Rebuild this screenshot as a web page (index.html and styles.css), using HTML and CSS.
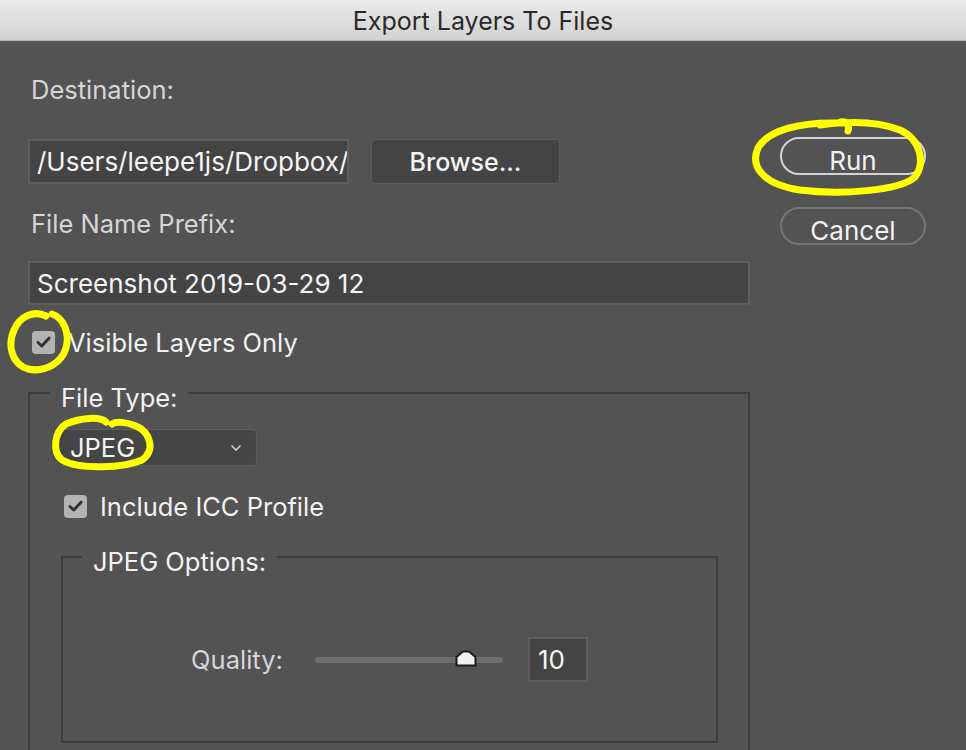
FILE: index.html
```html
<!DOCTYPE html>
<html lang="en">
<head>
    <meta charset="UTF-8">
    <title>Export Layers To Files</title>
    <link rel="stylesheet" href="styles.css">
</head>
<body>
    <div class="dialog">
        <div class="titlebar">Export Layers To Files</div>
        <div class="content">
            <div class="main">
                <div class="label">Destination:</div>
                <div class="path-row">
                    <div class="field path">/Users/leepe1js/Dropbox/</div>
                    <button class="browse">Browse...</button>
                </div>
                <div class="label prefix-label">File Name Prefix:</div>
                <div class="field prefix">Screenshot 2019-03-29 12</div>
                <div class="check visible">
                    <span class="box"><svg width="15" height="12" viewBox="0 0 15 12"><path d="M2 6.5 L5.8 10 L13 2.2" fill="none" stroke="#333" stroke-width="3" stroke-linecap="round" stroke-linejoin="round"/></svg></span>
                    Visible Layers Only
                </div>
                <fieldset class="group outer">
                    <legend>File Type:</legend>
                    <div class="select">
                        JPEG
                        <svg width="12" height="8" viewBox="0 0 12 8"><path d="M1.5 1.5 L6 6 L10.5 1.5" fill="none" stroke="#cfcfcf" stroke-width="1.6"/></svg>
                    </div>
                    <div class="check icc">
                        <span class="box"><svg width="15" height="12" viewBox="0 0 15 12"><path d="M2 6.5 L5.8 10 L13 2.2" fill="none" stroke="#333" stroke-width="3" stroke-linecap="round" stroke-linejoin="round"/></svg></span>
                        Include ICC Profile
                    </div>
                    <fieldset class="group inner">
                        <legend>JPEG Options:</legend>
                        <div class="quality">
                            <span class="quality-label">Quality:</span>
                            <div class="slider">
                                <div class="track"></div>
                                <svg class="thumb" width="22" height="17" viewBox="0 0 22 17"><path d="M1.5 15.5 L1.5 7 L8 1.5 L14 1.5 L20.5 7 L20.5 15.5 Z" fill="#f0f0f0" stroke="#1c1c1c" stroke-width="2" stroke-linejoin="round"/></svg>
                            </div>
                            <div class="field number">10</div>
                        </div>
                    </fieldset>
                </fieldset>
            </div>
            <div class="actions">
                <button class="pill run">Run</button>
                <button class="pill cancel">Cancel</button>
            </div>
        </div>

        <!-- yellow marker notes drawn over the dialog -->
        <svg class="marks" width="966" height="750" viewBox="0 0 966 750">
            <g fill="none" stroke="#ffff00" stroke-width="7" stroke-linecap="round" stroke-linejoin="round">
                <path d="M848 131 C850 123 846 120 838 123 C800 122 768 130 758 148 C750 166 762 184 800 190 C840 195 900 191 915 177 C926 162 920 139 900 130 C880 122 850 121 820 125"/>
                <path d="M46 316 C34 310 20 316 14 330 C7 346 12 364 28 369 C46 373 62 362 66 348 C70 334 64 318 52 314"/>
                <path d="M106 422 C100 416 80 418 66 424 C54 432 52 452 62 460 C80 470 124 468 142 460 C156 450 150 432 136 426 C126 422 116 421 112 424"/>
            </g>
        </svg>
    </div>
</body>
</html>
```

FILE: styles.css
```css
body {
    margin: 0;
    background: #535353;
    font-family: Inter, "Noto Sans", sans-serif;
}
.dialog {
    position: relative;
    width: 966px;
    height: 750px;
    overflow: hidden;
    background: #535353;
}
.titlebar {
    height: 40px;
    line-height: 42px;
    text-align: center;
    font-family: Inter, "Liberation Sans", sans-serif;
    font-size: 25px;
    color: #2a2a2a;
    background: linear-gradient(#ebeaeb, #d3d2d3);
    border-bottom: 1px solid #b4b4b4;
}
.content {
    display: flex;
    gap: 30px;
    padding: 34px 0 0 28px;
}
.main {
    width: 722px;
    display: flex;
    flex-direction: column;
}
.label {
    font-size: 25.5px;
    line-height: 30px;
    color: #d6d6d6;
    padding-left: 3px;
}
.prefix-label {
    margin-top: 25px;
}
.path-row {
    display: flex;
    gap: 22px;
    margin-top: 34px;
}
.field {
    box-sizing: border-box;
    background: #444444;
    border: 2px solid #5e5e5e;
    color: #f4f4f4;
    font-size: 26px;
    display: flex;
    align-items: center;
    padding-left: 7px;
    white-space: nowrap;
    overflow: hidden;
}
.path {
    width: 321px;
    height: 45px;
}
.browse {
    width: 189px;
    height: 45px;
    background: #444444;
    border: 1px solid #5c5c5c;
    border-radius: 4px;
    color: #f4f4f4;
    font-family: Inter, sans-serif;
    font-size: 25px;
    font-weight: 500;
}
.prefix {
    width: 722px;
    height: 44px;
    margin-top: 22px;
}
.check {
    display: flex;
    align-items: center;
    gap: 13px;
    height: 30px;
    font-size: 25.5px;
    color: #f2f2f2;
}
.check .box {
    width: 23px;
    height: 23px;
    border-radius: 4px;
    background: #b3b3b3;
    display: flex;
    align-items: center;
    justify-content: center;
}
.visible {
    margin-top: 22px;
    padding-left: 4px;
}
.group {
    margin: 16px 0 0;
    border: 2px solid #3d3d3d;
    min-width: 0;
}
.group legend {
    font-size: 25.5px;
    line-height: 30px;
    color: #f2f2f2;
    padding: 10px 11px 0;
}
.outer {
    padding: 0 30px 60px 31px;
}
.outer > legend {
    margin-left: -11px;
}
.select {
    box-sizing: border-box;
    width: 200px;
    height: 37px;
    margin: 16px 0 0 -4px;
    padding: 0 14px 0 12px;
    display: flex;
    align-items: center;
    justify-content: space-between;
    background: #454545;
    border: 1px solid #5e5e5e;
    border-radius: 4px;
    font-size: 25.5px;
    color: #f4f4f4;
}
.icc {
    margin-top: 25px;
    padding-left: 3px;
}
.inner {
    margin-top: 16px;
    padding: 0 19px 59px;
}
.quality {
    display: flex;
    align-items: center;
    justify-content: center;
    margin-top: 60px;
    margin-left: -19px;
    margin-right: -19px;
}
.quality-label {
    font-size: 25.5px;
    color: #d6d6d6;
    margin-right: 32px;
}
.slider {
    position: relative;
    width: 188px;
    height: 20px;
    display: flex;
    align-items: center;
    margin-right: 25px;
}
.track {
    width: 100%;
    height: 6px;
    border-radius: 3px;
    background: #6e6e6e;
}
.thumb {
    position: absolute;
    left: 140px;
    top: 0;
}
.number {
    width: 60px;
    height: 45px;
    padding-left: 8px;
}
.actions {
    display: flex;
    flex-direction: column;
    gap: 32px;
    padding-top: 62px;
}
.pill {
    width: 146px;
    height: 38px;
    border-radius: 19px;
    background: #535353;
    color: #f2f2f2;
    font-family: Inter, sans-serif;
    font-size: 26px;
    padding: 6px 0 0;
}
.run {
    border: 2px solid #d4d4d4;
}
.cancel {
    border: 2px solid #757575;
}
.marks {
    position: absolute;
    left: 0;
    top: 0;
    pointer-events: none;
}
```
